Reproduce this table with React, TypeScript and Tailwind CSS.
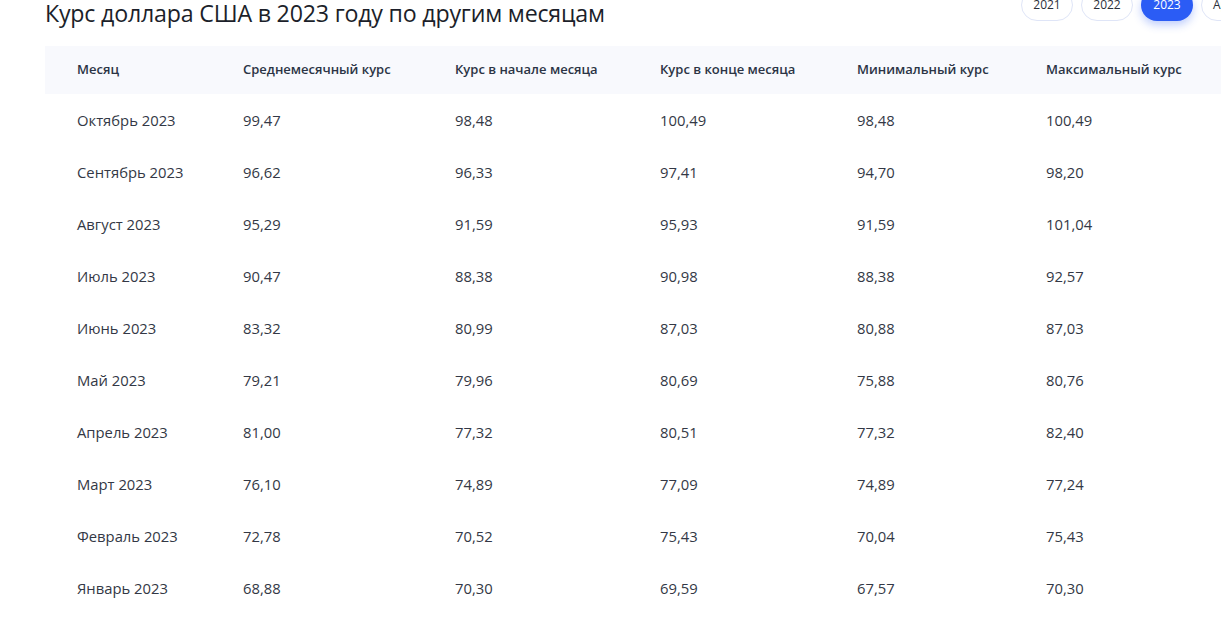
import React from "react";

const rows = [
  ["Октябрь 2023", "99,47", "98,48", "100,49", "98,48", "100,49"],
  ["Сентябрь 2023", "96,62", "96,33", "97,41", "94,70", "98,20"],
  ["Август 2023", "95,29", "91,59", "95,93", "91,59", "101,04"],
  ["Июль 2023", "90,47", "88,38", "90,98", "88,38", "92,57"],
  ["Июнь 2023", "83,32", "80,99", "87,03", "80,88", "87,03"],
  ["Май 2023", "79,21", "79,96", "80,69", "75,88", "80,76"],
  ["Апрель 2023", "81,00", "77,32", "80,51", "77,32", "82,40"],
  ["Март 2023", "76,10", "74,89", "77,09", "74,89", "77,24"],
  ["Февраль 2023", "72,78", "70,52", "75,43", "70,04", "75,43"],
  ["Январь 2023", "68,88", "70,30", "69,59", "67,57", "70,30"],
];

const headers = [
  "Месяц",
  "Среднемесячный курс",
  "Курс в начале месяца",
  "Курс в конце месяца",
  "Минимальный курс",
  "Максимальный курс",
];

const grid = "grid grid-cols-[166px_212px_205px_197px_189px_1fr] pl-8";

export default function App() {
  return (
    <div
      className="w-[1221px] h-[622px] overflow-hidden bg-white text-[#2b2f3a]"
      style={{ fontFamily: '"Open Sans", "Noto Sans", sans-serif' }}
    >
      <div className="relative pl-[45px]">
        <div className="flex items-start justify-between">
          <h2 className="text-[23.2px] leading-[26px] text-[#1c1f2a] font-normal tracking-[-0.2px]">
            Курс доллара США в 2023 году по другим месяцам
          </h2>
          <div className="flex gap-2 -mt-[11px] w-[200px] shrink-0">
            {["2021", "2022"].map((y) => (
              <div
                key={y}
                className="h-8 w-[52px] shrink-0 rounded-full border border-[#dfe5f7] flex items-center justify-center text-[12px] text-[#2b2f3a]"
              >
                {y}
              </div>
            ))}
            <div className="h-8 w-[52px] shrink-0 rounded-full bg-[#2b5cf5] shadow-[0_4px_8px_rgba(43,92,245,0.3)] flex items-center justify-center text-[12px] text-white">
              2023
            </div>
            <div className="h-8 w-[60px] shrink-0 rounded-full border border-[#dfe5f7] flex items-center pl-[11px] text-[12px] text-[#2b2f3a]">
              Архив
            </div>
          </div>
        </div>
        <div className="mt-[20px] w-[1200px]">
          <div className={`${grid} h-12 items-center bg-[#f8f9fd] text-[13px] font-semibold text-[#2b3445]`}>
            {headers.map((h) => (
              <div key={h}>{h}</div>
            ))}
          </div>
          {rows.map((r) => (
            <div key={r[0]} className={`${grid} h-[52px] items-center text-[14.8px] text-[#333845]`}>
              {r.map((c, i) => (
                <div key={i}>{c}</div>
              ))}
            </div>
          ))}
        </div>
      </div>
    </div>
  );
}
